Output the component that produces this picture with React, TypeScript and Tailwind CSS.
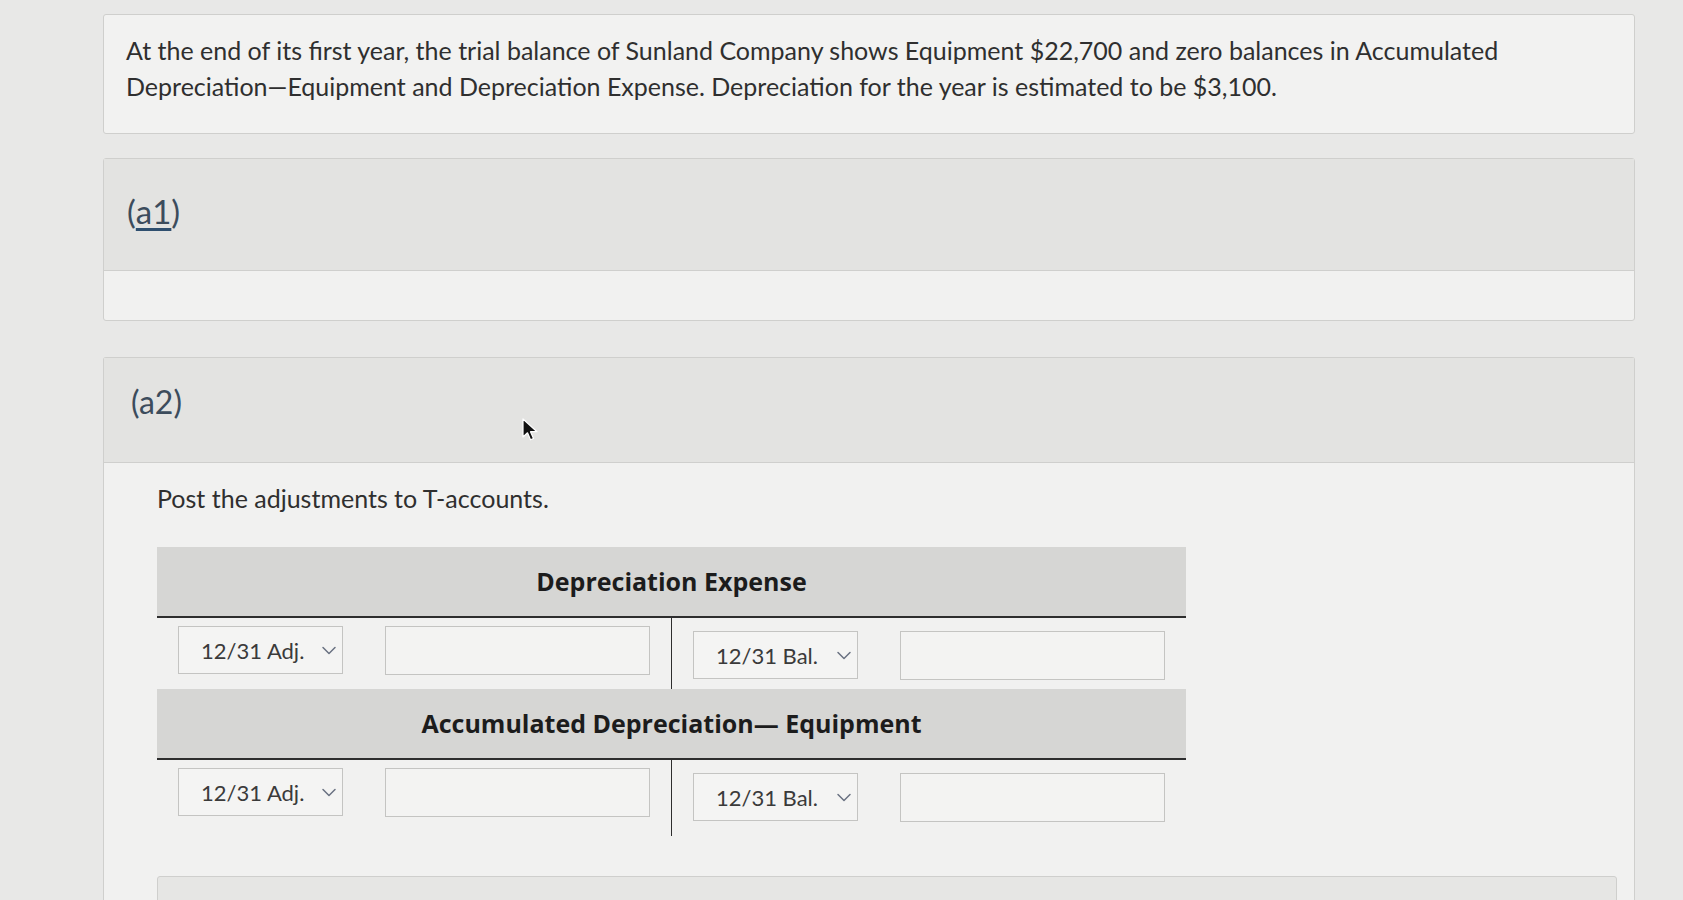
import { FC } from "react";

const lato = { fontFamily: "Lato, 'Open Sans', sans-serif" };

const Chevron: FC = () => (
  <svg width="16" height="16" viewBox="0 0 16 16" className="text-gray-500">
    <path d="M2 5.5l6 6 6-6" fill="none" stroke="currentColor" strokeWidth="1.5" strokeLinecap="round" strokeLinejoin="round" />
  </svg>
);

const SelectBox: FC<{ label: string }> = ({ label }) => (
  <div className="flex h-[48px] w-[165px] items-center justify-between border border-[#c4c4c2] bg-[#f4f4f3] pl-[22px] pr-[5px] text-[22px] text-[#3a3a3a]">
    <span>{label}</span>
    <Chevron />
  </div>
);

const InputBox: FC = () => (
  <div className="h-[49px] w-[265px] border border-[#c4c4c2] bg-[#f3f3f2]" />
);

const TAccount: FC<{ title: string; rowClass: string }> = ({ title, rowClass }) => (
  <div className="w-[1029px]">
    <div
      className="flex h-[71px] items-center justify-center border-b-2 border-[#2e2e2e] bg-[#d6d6d4] text-[25px] font-bold text-[#1c1c1c]"
      style={{ fontFamily: "'Open Sans', 'Noto Sans', sans-serif" }}
    >
      {title}
    </div>
    <div className={`flex ${rowClass}`}>
      <div className="flex flex-1 items-start gap-[42px] border-r border-[#2e2e2e] pl-[21px] pt-[8px]">
        <SelectBox label="12/31 Adj." />
        <InputBox />
      </div>
      <div className="flex flex-1 items-start gap-[42px] pl-[21px] pt-[13px]">
        <SelectBox label="12/31 Bal." />
        <InputBox />
      </div>
    </div>
  </div>
);

export default function App() {
  return (
    <div className="relative h-[900px] w-[1683px] overflow-hidden bg-[#e8e8e7]" style={lato}>
      <div className="ml-[103px] flex w-[1532px] flex-col pt-[14px]">
        <div className="h-[120px] rounded-[3px] border border-[#cfcfcd] bg-[#f2f2f1] px-[22px] pt-[17px] text-[25px] leading-[36px] text-[#2f2f2f]">
          At the end of its first year, the trial balance of Sunland Company shows Equipment $22,700 and zero balances in Accumulated
          Depreciation—Equipment and Depreciation Expense. Depreciation for the year is estimated to be $3,100.
        </div>

        <div className="mt-[24px] rounded-[3px] border border-[#cfcfcd] bg-[#f1f1f0]">
          <div className="flex h-[112px] items-center border-b border-[#cfcfcd] bg-[#e3e3e1] px-[23px] pb-[6px] text-[33px] text-[#3c4c5c]">
            (<span className="underline decoration-[#2f4f6f] underline-offset-[4px]">a1</span>)
          </div>
          <div className="h-[49px]" />
        </div>

        <div className="mt-[36px] h-[600px] rounded-t-[3px] border border-b-0 border-[#cfcfcd] bg-[#f1f1f0]">
          <div className="flex h-[105px] items-center border-b border-[#cfcfcd] bg-[#e3e3e1] px-[27px] pb-[16px] text-[32px] text-[#3c4c5c]">
            (a2)
          </div>
          <div className="pl-[53px] pt-[19px]">
            <p className="text-[25px] leading-[32px] text-[#2f2f2f]">Post the adjustments to T-accounts.</p>
            <div className="mt-[33px]">
              <TAccount title="Depreciation Expense" rowClass="h-[71px]" />
              <TAccount title="Accumulated Depreciation— Equipment" rowClass="h-[76px]" />
            </div>
            <div className="mt-[40px] h-[60px] w-[1460px] rounded-t-[3px] border border-[#cfcfcd] bg-[#e6e6e4]" />
          </div>
        </div>
      </div>

      <svg className="absolute left-[522px] top-[418px]" width="16" height="24" viewBox="0 0 16 24">
        <path d="M1 1v18l4.5-4.2 3 7 3-1.3-3-6.8H15z" fill="#111" stroke="#fff" strokeWidth="1.2" strokeLinejoin="round" />
      </svg>
    </div>
  );
}
